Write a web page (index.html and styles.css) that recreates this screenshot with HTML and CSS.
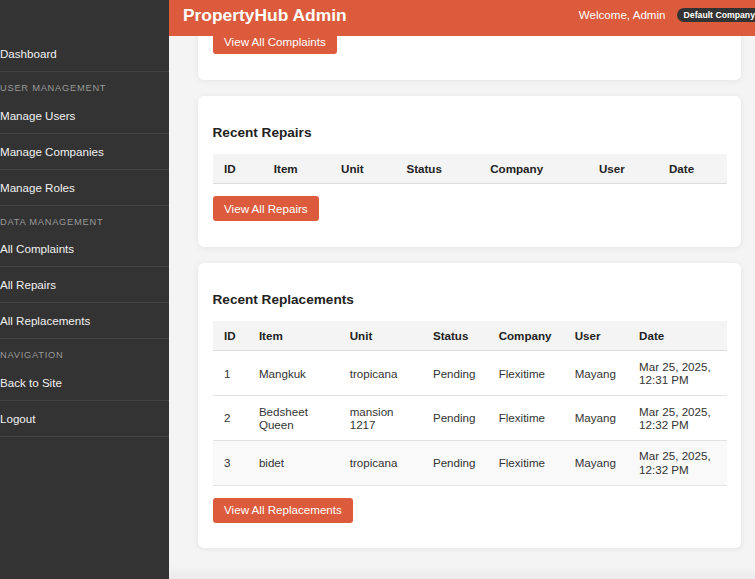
FILE: index.html
```html
<!DOCTYPE html>
<html lang="en">
<head>
<meta charset="utf-8">
<title>PropertyHub Admin</title>
<link rel="stylesheet" href="styles.css">
</head>
<body>
<div class="app">
  <aside class="sidebar">
    <nav class="nav">
      <a class="nav-link" href="#">Dashboard</a>
      <div class="nav-label">User Management</div>
      <a class="nav-link" href="#">Manage Users</a>
      <a class="nav-link" href="#">Manage Companies</a>
      <a class="nav-link" href="#">Manage Roles</a>
      <div class="nav-label">Data Management</div>
      <a class="nav-link" href="#">All Complaints</a>
      <a class="nav-link" href="#">All Repairs</a>
      <a class="nav-link" href="#">All Replacements</a>
      <div class="nav-label">Navigation</div>
      <a class="nav-link" href="#">Back to Site</a>
      <a class="nav-link" href="#">Logout</a>
    </nav>
  </aside>
  <div class="main">
    <header class="topbar">
      <div class="brand">PropertyHub Admin</div>
      <div class="user">
        <span class="welcome">Welcome, Admin</span>
        <span class="badge">Default Company</span>
      </div>
    </header>
    <div class="content">
      <section class="card card-partial">
        <div class="actions"><a class="btn" href="#">View All Complaints</a></div>
      </section>

      <section class="card">
        <h3 class="card-title">Recent Repairs</h3>
        <table class="table">
          <thead>
            <tr><th>ID</th><th>Item</th><th>Unit</th><th>Status</th><th>Company</th><th>User</th><th>Date</th></tr>
          </thead>
          <tbody></tbody>
        </table>
        <div class="actions"><a class="btn" href="#">View All Repairs</a></div>
      </section>

      <section class="card">
        <h3 class="card-title">Recent Replacements</h3>
        <table class="table">
          <thead>
            <tr><th>ID</th><th>Item</th><th>Unit</th><th>Status</th><th>Company</th><th>User</th><th>Date</th></tr>
          </thead>
          <tbody>
            <tr><td>1</td><td>Mangkuk</td><td>tropicana</td><td>Pending</td><td>Flexitime</td><td>Mayang</td><td>Mar 25, 2025, 12:31 PM</td></tr>
            <tr><td>2</td><td>Bedsheet Queen</td><td>mansion 1217</td><td>Pending</td><td>Flexitime</td><td>Mayang</td><td>Mar 25, 2025, 12:32 PM</td></tr>
            <tr class="row-hover"><td>3</td><td>bidet</td><td>tropicana</td><td>Pending</td><td>Flexitime</td><td>Mayang</td><td>Mar 25, 2025, 12:32 PM</td></tr>
          </tbody>
        </table>
        <div class="actions"><a class="btn" href="#">View All Replacements</a></div>
      </section>
    </div>
  </div>
</div>
</body>
</html>
```
FILE: styles.css
```css
html, body {
  margin: 0;
  height: 100%;
  overflow: hidden;
}

body {
  font-family: "Liberation Sans", Arial, Helvetica, sans-serif;
  font-size: 11.6px;
  line-height: 13.3px;
  color: #333;
  background: #f4f4f4;
}

.app {
  display: flex;
  width: 770px;
  height: 100vh;
}

/* Sidebar */
.sidebar {
  flex: 0 0 169px;
  box-sizing: border-box;
  background: #333;
  padding-top: 36px;
}

.nav {
  display: flex;
  flex-direction: column;
}

.nav-link {
  display: block;
  height: 35px;
  line-height: 35px;
  color: #f1f1f1;
  text-decoration: none;
  border-bottom: 1px solid #444;
  white-space: nowrap;
}

.nav-label {
  padding: 11px 0 3.5px;
  line-height: 11px;
  font-size: 9.3px;
  letter-spacing: 0.75px;
  text-transform: uppercase;
  color: #999;
  white-space: nowrap;
}

/* Main column */
.main {
  flex: 1;
  min-width: 0;
  display: flex;
  flex-direction: column;
}

.topbar {
  flex: 0 0 36px;
  height: 36px;
  box-sizing: border-box;
  background: #dc5b3c;
  color: #fff;
  display: flex;
  align-items: center;
  justify-content: space-between;
  padding: 0 8px 6px 14px;
  position: relative;
  z-index: 1;
}

.brand {
  font-size: 17.4px;
  line-height: 20px;
  font-weight: bold;
}

.user {
  display: flex;
  align-items: center;
  gap: 11px;
}

.welcome {
  font-size: 11.6px;
}

.badge {
  background: #333;
  color: #fff;
  font-size: 8.7px;
  font-weight: bold;
  line-height: 10px;
  padding: 2px 7px;
  border-radius: 8px;
  white-space: nowrap;
}

/* Content (scrolled to the bottom) */
.content {
  flex: 1;
  min-height: 0;
  overflow: hidden;
  display: flex;
  flex-direction: column;
  justify-content: flex-end;
  gap: 16px;
  padding: 0 29px 31px;
  background: linear-gradient(to bottom, #f4f4f4 calc(100% - 14px), #ebebeb 100%);
}

.card {
  flex-shrink: 0;
  background: #fff;
  border-radius: 6px;
  box-shadow: 0 1px 6px rgba(0, 0, 0, 0.07);
  padding: 29px 14.5px 25.5px;
}

.card-partial {
  padding-top: 60px;
}

.card-partial .actions {
  margin-top: 0;
}

.card-title {
  margin: 0 0 13.6px;
  font-size: 13.6px;
  line-height: 15.6px;
  font-weight: bold;
  color: #222;
}

.table {
  width: 100%;
  border-collapse: collapse;
}

.table th {
  background: #f4f4f4;
  text-align: left;
  font-weight: bold;
  color: #222;
  line-height: 13.3px;
  padding: 8.1px 11.6px;
  border-bottom: 1px solid #ddd;
}

.table td {
  line-height: 13.3px;
  padding: 8.6px 11.6px;
  border-bottom: 1px solid #e3e3e3;
}

.row-hover td {
  background: #f9f9f9;
}

.actions {
  display: flex;
  margin-top: 12px;
}

.btn {
  background: #dc5b3c;
  color: #fff;
  text-decoration: none;
  line-height: 13.3px;
  padding: 5.8px 11.6px;
  border-radius: 3px;
}
```
